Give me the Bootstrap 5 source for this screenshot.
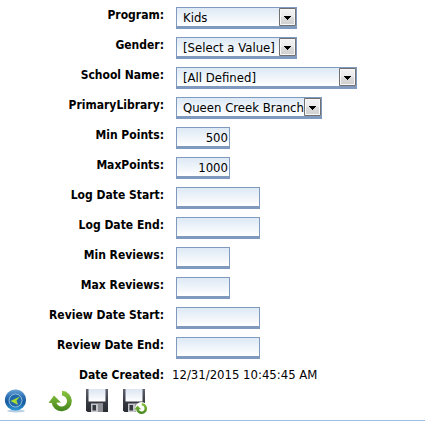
<!DOCTYPE html>
<html lang="en">
<head>
<meta charset="utf-8">
<meta name="viewport" content="width=device-width, initial-scale=1">
<title>Reader report</title>
<link href="https://cdn.jsdelivr.net/npm/bootstrap@5.3.0/dist/css/bootstrap.min.css" rel="stylesheet">
<style>
body { font-family: "DejaVu Sans Condensed", "DejaVu Sans", sans-serif; font-stretch: condensed; font-size: 13px; line-height: 16px; color: #000; background: #fff; }
.fields { padding-top: 7px; }
.field-row { min-height: 22px; margin-bottom: 8px; }
.field-row:last-child { margin-bottom: 0; }
.field-label { width: 164px; flex: none; text-align: right; font-size: 12px; font-weight: 700; }
.field-box { height: 22px; margin-left: 12px; padding: 1px 1px 0; border: 1px solid #8099bf; border-bottom-width: 3px; border-radius: 0; background: linear-gradient(#dde9f5, #fff); color: #000; font-stretch: condensed; }
.field-pick { appearance: none; padding: 1px 17px 0 6px;
  background: url("data:image/svg+xml,%3Csvg xmlns='http://www.w3.org/2000/svg' width='17' height='18'%3E%3ClinearGradient id='g' x2='0' y2='1'%3E%3Cstop stop-color='%23f3f3f3'/%3E%3Cstop offset='.5' stop-color='%23eaeaea'/%3E%3Cstop offset='.5' stop-color='%23dcdcdc'/%3E%3Cstop offset='1' stop-color='%23cfcfcf'/%3E%3C/linearGradient%3E%3Cpath d='M.5.5h16v17H.5z' fill='url(%23g)' stroke='%23707070'/%3E%3Cpath d='M1.5 1.5h14v15h-14z' fill='none' stroke='%23f8f8f8'/%3E%3Cpath d='M5 8h7v1h-1v1h-1v1H9v1H8v-1H7v-1H6V9H5z'/%3E%3C/svg%3E") right center no-repeat, linear-gradient(#dde9f5, #fff); }
.w-short { width: 54px; }
.w-date { width: 84px; }
.w-pick { width: 121px; }
.w-branch { width: 146px; }
.w-school { width: 181px; }
.field-value { margin-left: 8px; }
.actions { padding: 0 0 7px 4px; border-bottom: 1px solid #9dbde9; }
.icon-btn { width: 24px; height: 24px; line-height: 0; }
.icon-btn + .icon-btn { margin-left: 13px; }
.icon-btn.back + .icon-btn { margin-left: 20px; }
</style>
<script src="https://cdn.jsdelivr.net/npm/bootstrap@5.3.0/dist/js/bootstrap.bundle.min.js"></script>
</head>
<body>
<form>
  <div class="fields">
    <div class="field-row d-flex"><label class="field-label" for="program">Program:</label><select id="program" class="field-box field-pick w-pick"><option>Kids</option></select></div>
    <div class="field-row d-flex"><label class="field-label" for="gender">Gender:</label><select id="gender" class="field-box field-pick w-pick"><option>[Select a Value]</option></select></div>
    <div class="field-row d-flex"><label class="field-label" for="school">School Name:</label><select id="school" class="field-box field-pick w-school"><option>[All Defined]</option></select></div>
    <div class="field-row d-flex"><label class="field-label" for="library">PrimaryLibrary:</label><select id="library" class="field-box field-pick w-branch"><option>Queen Creek Branch</option></select></div>
    <div class="field-row d-flex"><label class="field-label" for="minpoints">Min Points:</label><input id="minpoints" type="text" class="field-box w-short text-end" value="500"></div>
    <div class="field-row d-flex"><label class="field-label" for="maxpoints">MaxPoints:</label><input id="maxpoints" type="text" class="field-box w-short text-end" value="1000"></div>
    <div class="field-row d-flex"><label class="field-label" for="logstart">Log Date Start:</label><input id="logstart" type="text" class="field-box w-date"></div>
    <div class="field-row d-flex"><label class="field-label" for="logend">Log Date End:</label><input id="logend" type="text" class="field-box w-date"></div>
    <div class="field-row d-flex"><label class="field-label" for="minreviews">Min Reviews:</label><input id="minreviews" type="text" class="field-box w-short text-end"></div>
    <div class="field-row d-flex"><label class="field-label" for="maxreviews">Max Reviews:</label><input id="maxreviews" type="text" class="field-box w-short text-end"></div>
    <div class="field-row d-flex"><label class="field-label" for="revstart">Review Date Start:</label><input id="revstart" type="text" class="field-box w-date"></div>
    <div class="field-row d-flex"><label class="field-label" for="revend">Review Date End:</label><input id="revend" type="text" class="field-box w-date"></div>
    <div class="field-row d-flex"><label class="field-label" for="created">Date Created:</label><output id="created" class="field-value p-0">12/31/2015 10:45:45 AM</output></div>
  </div>
  <div class="actions d-flex">
    <button type="button" class="icon-btn back border-0 bg-transparent p-0" aria-label="Back">
      <svg width="24" height="24" viewBox="0 0 24 24">
        <defs><linearGradient id="orb" x2="0" y2="1"><stop stop-color="#6aa5d6"/><stop offset=".35" stop-color="#2c70b4"/><stop offset=".6" stop-color="#17599c"/><stop offset="1" stop-color="#2d9bd8"/></linearGradient></defs>
        <ellipse cx="12" cy="22" rx="9" ry="1.500" fill="#b9cfe2"/>
        <circle cx="11.500" cy="11" r="10.600" fill="url(#orb)"/>
        <circle cx="11.500" cy="11.500" r="6.500" fill="#2269ab" stroke="#8fbfe0" stroke-width="1"/>
        <path d="M6.500 12 16 7.500 12.500 11.500 14 16z" fill="#a8dc30"/>
      </svg></button>
    <button type="button" class="icon-btn border-0 bg-transparent p-0" aria-label="Refresh">
      <svg width="24" height="24" viewBox="0 0 24 24">
        <defs>
          <linearGradient id="leaf" gradientUnits="userSpaceOnUse" x1="0" y1="2" x2="0" y2="23"><stop stop-color="#8cc63f"/><stop offset="1" stop-color="#41821b"/></linearGradient>
          <g id="turn"><path d="M14 4.200A7.800 7.800 0 1 1 5.900 13" fill="none" stroke="url(#leaf)" stroke-width="4.800"/><path d="M.5 14 6 6.500 13 13.500z" fill="url(#leaf)"/></g>
        </defs>
        <use href="#turn"/>
      </svg></button>
    <button type="button" class="icon-btn border-0 bg-transparent p-0" aria-label="Save">
      <svg width="24" height="24" viewBox="0 0 24 24">
        <defs>
          <linearGradient id="shell" x2="0" y2="1"><stop stop-color="#60636d"/><stop offset=".55" stop-color="#373a43"/><stop offset="1" stop-color="#292b31"/></linearGradient>
          <linearGradient id="paper" x2="0" y2="1"><stop stop-color="#dce5f2"/><stop offset="1" stop-color="#fff"/></linearGradient>
          <g id="disk"><path d="M1 0h22v23H2.500L1 21.500z" fill="url(#shell)"/><path d="M3.500 0h17v12.500h-17z" fill="url(#paper)"/><path d="M6 14.500h12V23H6z" fill="#c5c7cb"/><path d="M13 14.500h5V23h-5z" fill="#8d9096"/><path d="M7.500 16h3.500v5.500H7.500z" fill="#353841"/></g>
        </defs>
        <use href="#disk"/>
      </svg></button>
    <button type="button" class="icon-btn border-0 bg-transparent p-0" aria-label="Save and refresh">
      <svg width="26" height="26" viewBox="0 0 26 26">
        <use href="#disk"/>
        <circle cx="19.500" cy="19.500" r="6.500" fill="#fff"/>
        <use href="#turn" transform="translate(12.200 13) scale(.54)"/>
      </svg></button>
  </div>
</form>
</body>
</html>
